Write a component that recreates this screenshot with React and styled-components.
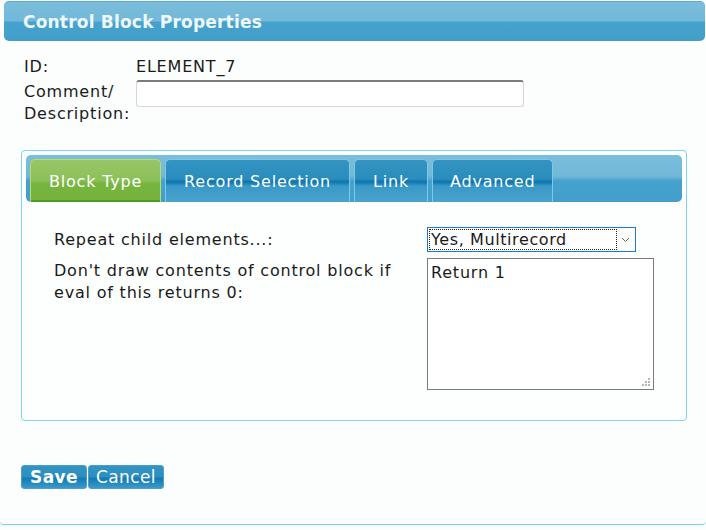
import React from 'react'
import styled, { createGlobalStyle } from 'styled-components'

const GlobalStyle = createGlobalStyle`
  html, body {
    margin: 0;
    padding: 0;
    background: #fcfdfd;
    font-family: 'DejaVu Sans', Verdana, sans-serif;
    color: #1a1a1a;
  }
`

const Dialog = styled.div`
  width: 706px;
  height: 525px;
  box-sizing: border-box;
  border-bottom: 1px solid #72d2f2;
  border-radius: 0 0 4px 4px;
  display: flex;
  flex-direction: column;
`

const TitleBar = styled.div`
  margin: 1px 1px 0 4px;
  height: 40px;
  border-radius: 5px;
  background: linear-gradient(#7bbddb 0%, #72b8d9 48%, #45a2cc 52%, #419fca 100%);
  border-top: 1px solid #5ea9d0;
  box-sizing: border-box;
  display: flex;
  align-items: center;
  padding-left: 19px;
  color: #eef7fb;
  font-weight: bold;
  font-size: 17px;
  letter-spacing: 0.2px;
`

const Fields = styled.div`
  display: grid;
  grid-template-columns: 112px auto;
  row-gap: 3px;
  padding: 15px 0 0 24px;
  font-size: 16px;
  line-height: 22px;
  letter-spacing: 0.8px;
`

const Label = styled.div`
  padding-top: ${p => p.$offset || 0}px;
`

const Value = styled.div``

const TextInput = styled.input`
  width: 388px;
  height: 27px;
  margin-top: -1px;
  box-sizing: border-box;
  border: 1px solid #d6d6d6;
  border-top: 2px solid #7b7b7b;
  border-radius: 3px;
  background: #fff;
`

const TabPanel = styled.div`
  margin: 25px 0 0 21px;
  width: 666px;
  height: 271px;
  box-sizing: border-box;
  border: 1px solid #7fd2f2;
  border-radius: 4px;
  padding: 4px;
  background: #fdfefe;
`

const TabBar = styled.div`
  height: 47px;
  border-radius: 5px;
  background: linear-gradient(#7bbddb 0%, #72b8d9 45%, #45a2cc 55%, #419fca 100%);
  display: flex;
  align-items: flex-end;
  gap: 4px;
  padding-left: 4px;
`

const Tab = styled.div`
  height: 43px;
  box-sizing: border-box;
  padding: 0 ${p => p.$pad}px;
  border: 1px solid ${p => (p.$active ? '#b8dc70' : '#7ec8ea')};
  border-bottom: none;
  border-radius: 5px 5px 0 0;
  display: flex;
  align-items: center;
  font-size: 16px;
  letter-spacing: 0.8px;
  color: #fff;
  background: ${p =>
    p.$active
      ? 'linear-gradient(#97c666 0%, #8cc059 48%, #78b540 56%, #74b23b 100%)'
      : 'linear-gradient(#3394c2 0%, #2b8dbd 45%, #0c74ae 52%, #3a99c7 62%, #4aa3cd 100%)'};
  ${p => p.$active && 'box-shadow: inset 0 -2px 0 #4c9a2a;'}
`

const TabBody = styled.div`
  display: grid;
  grid-template-columns: 373px auto;
  padding: 25px 0 0 28px;
  font-size: 16px;
  line-height: 22px;
  letter-spacing: 0.8px;
  row-gap: 6px;
`

const Select = styled.div`
  width: 209px;
  height: 25px;
  box-sizing: border-box;
  border: 1px solid #1a7bd4;
  background: #fff;
  display: flex;
  align-items: center;
  font-size: 16px;
  position: relative;
`

const SelectText = styled.span`
  flex: 1;
  height: 21px;
  margin: 1px;
  padding-left: 2px;
  outline: 1px dotted #222;
  outline-offset: -1px;
  line-height: 21px;
  margin-right: 18px;
  letter-spacing: 0.6px;
`

const Chevron = styled.svg`
  position: absolute;
  right: 5px;
  top: 9px;
`

const TextArea = styled.div`
  width: 227px;
  height: 132px;
  box-sizing: border-box;
  border: 1px solid #7a7a7a;
  background: #fff;
  padding: 3px 3px;
  font-size: 16px;
  position: relative;
`

const Grip = styled.svg`
  position: absolute;
  right: 2px;
  bottom: 2px;
`

const Buttons = styled.div`
  display: flex;
  gap: 1px;
  margin: 44px 0 0 21px;
`

const Button = styled.button`
  height: 24px;
  box-sizing: border-box;
  padding: 0 ${p => p.$pad}px;
  border: 1px solid #4aa0cc;
  border-radius: 3px;
  background: linear-gradient(#3294c3 0%, #2e8fbf 48%, #107bb4 56%, #3b9ac8 100%);
  color: #fff;
  font-family: 'DejaVu Sans', Verdana, sans-serif;
  font-size: 17px;
  letter-spacing: 0.4px;
  font-weight: ${p => (p.$bold ? 'bold' : 'normal')};
  line-height: 20px;
`

export default function App() {
  return (
    <>
      <GlobalStyle />
      <Dialog>
        <TitleBar>Control Block Properties</TitleBar>
        <Fields>
          <Label>ID:</Label>
          <Value>ELEMENT_7</Value>
          <Label>Comment/<br />Description:</Label>
          <Value><TextInput type="text" /></Value>
        </Fields>
        <TabPanel>
          <TabBar>
            <Tab $active $pad={18}>Block Type</Tab>
            <Tab $pad={18}>Record Selection</Tab>
            <Tab $pad={18}>Link</Tab>
            <Tab $pad={17}>Advanced</Tab>
          </TabBar>
          <TabBody>
            <Label $offset={2}>Repeat child elements...:</Label>
            <Select>
              <SelectText>Yes, Multirecord</SelectText>
              <Chevron width="9" height="6" viewBox="0 0 9 6">
                <path d="M1 1 L4.5 4.5 L8 1" fill="none" stroke="#666" strokeWidth="1" />
              </Chevron>
            </Select>
            <Label $offset={2}>Don't draw contents of control block if<br />eval of this returns 0:</Label>
            <TextArea>
              Return 1
              <Grip width="9" height="9" viewBox="0 0 9 9">
                <g fill="#b5b5b5">
                  <rect x="6" y="0" width="2" height="2" />
                  <rect x="3" y="3" width="2" height="2" />
                  <rect x="6" y="3" width="2" height="2" />
                  <rect x="0" y="6" width="2" height="2" />
                  <rect x="3" y="6" width="2" height="2" />
                  <rect x="6" y="6" width="2" height="2" />
                </g>
              </Grip>
            </TextArea>
          </TabBody>
        </TabPanel>
        <Buttons>
          <Button $bold $pad={8}>Save</Button>
          <Button $pad={7}>Cancel</Button>
        </Buttons>
      </Dialog>
    </>
  )
}
